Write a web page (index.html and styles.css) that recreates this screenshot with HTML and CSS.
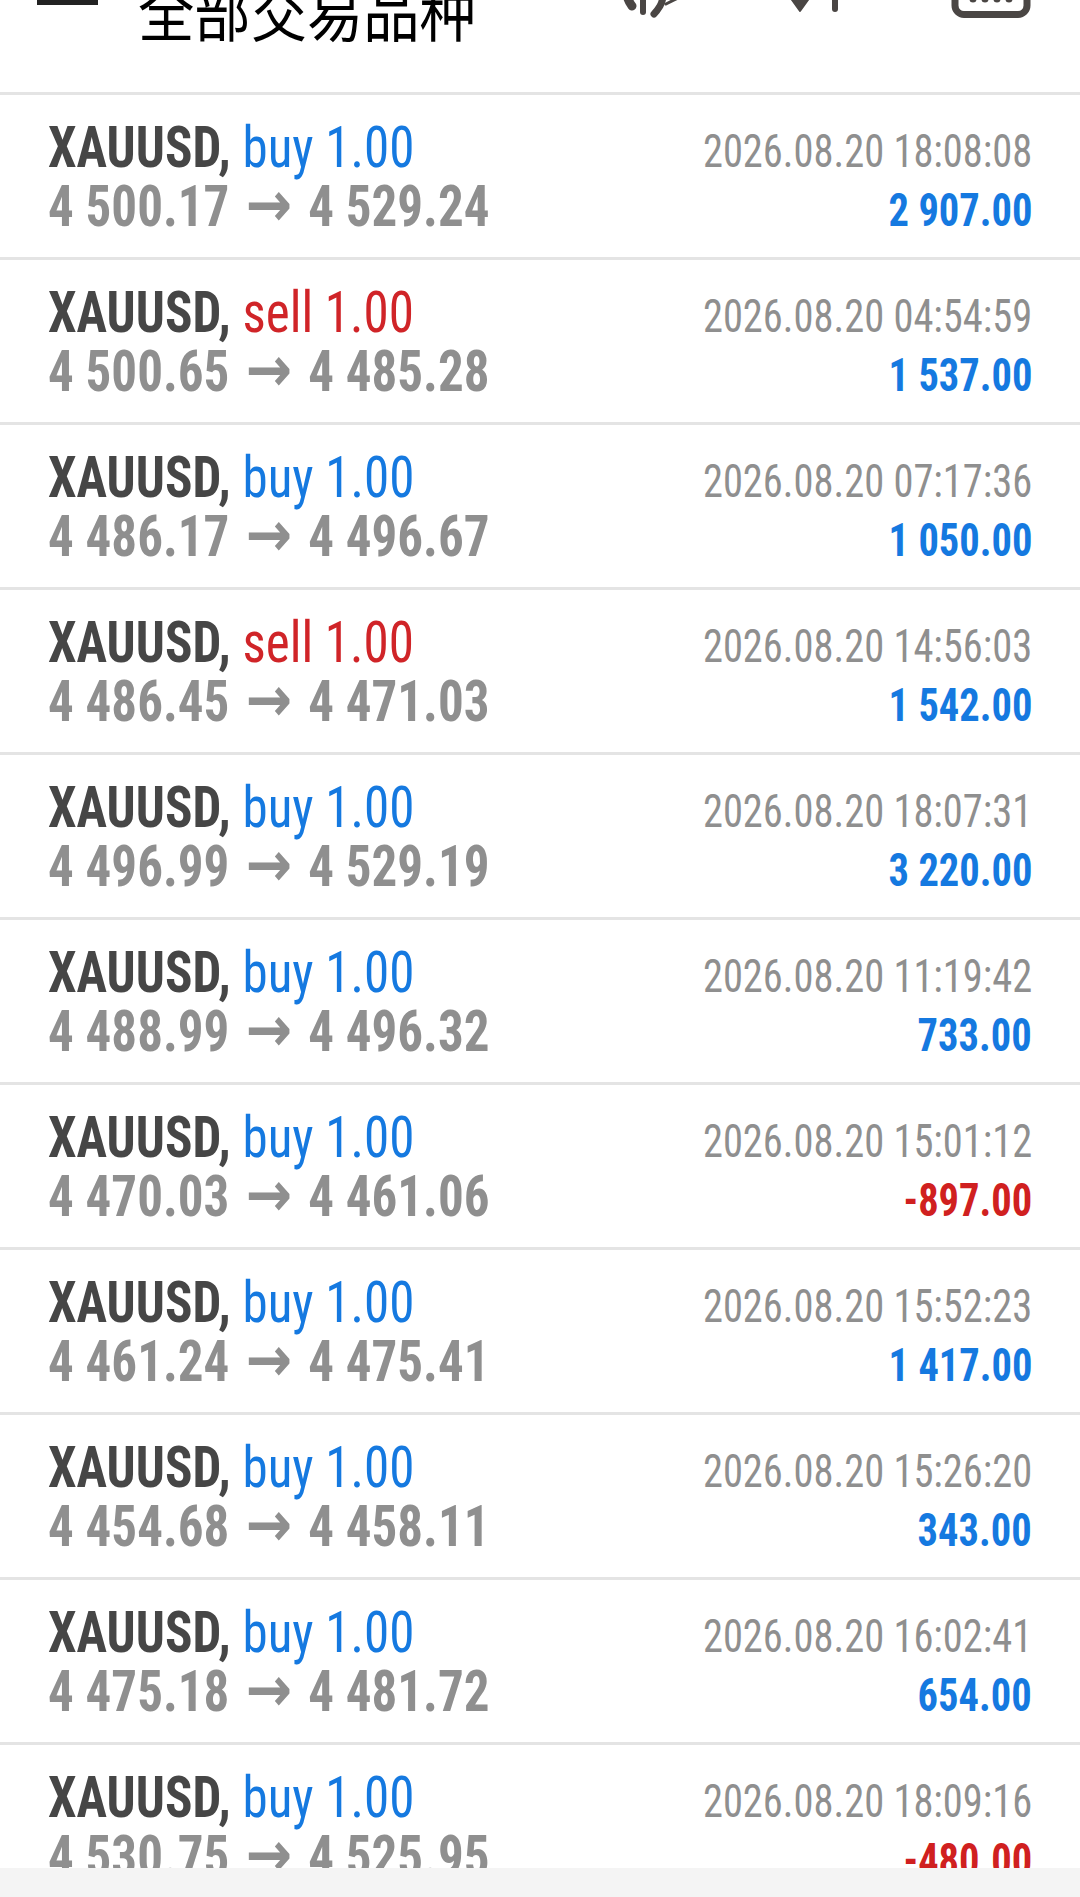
FILE: index.html
```html
<!DOCTYPE html>
<html lang="zh">
<head>
    <meta charset="UTF-8">
    <meta name="viewport" content="width=device-width, initial-scale=1.0">
    <title>交易历史</title>
    <link rel="stylesheet" href="styles.css">
</head>
<body>
    <header class="topbar">
        <div class="toolbar">
            <span class="menu-btn"></span>
            <h1 class="title">全部交易品种</h1>
            <svg class="icon icon-money" width="62" height="72" viewBox="0 0 62 72">
                <path d="M12 26 A26 26 0 0 0 10 60" fill="none" stroke="#4a4644" stroke-width="9" stroke-linecap="round"/>
                <rect x="18" y="14" width="6" height="55" rx="3" fill="#4a4644"/>
                <path d="M30 34 Q46 46 38 60 Q35 65 32 68" fill="none" stroke="#4a4644" stroke-width="7" stroke-linecap="round"/>
                <path d="M44 58 L60 50" fill="none" stroke="#4a4644" stroke-width="3" stroke-linecap="round"/>
            </svg>
            <svg class="icon icon-sort" width="54" height="72" viewBox="0 0 54 72">
                <rect x="12" y="0" width="6" height="46" fill="#4a4644"/>
                <path d="M0 44 L30 44 L15 65 Z" fill="#4a4644" stroke="#4a4644" stroke-width="2" stroke-linejoin="round"/>
                <rect x="47" y="8" width="6" height="58" rx="3" fill="#4a4644"/>
            </svg>
            <svg class="icon icon-cal" width="80" height="72" viewBox="0 0 80 72">
                <rect x="4" y="8" width="72" height="60.5" rx="9" fill="none" stroke="#4a4644" stroke-width="7"/>
                <circle cx="22" cy="53" r="3.5" fill="#4a4644"/>
                <circle cx="34" cy="53" r="3.5" fill="#4a4644"/>
                <circle cx="46" cy="53" r="3.5" fill="#4a4644"/>
                <circle cx="58" cy="53" r="3.5" fill="#4a4644"/>
            </svg>
        </div>
    </header>

    <ul class="deals">
        <li class="deal">
            <div class="line"><span class="sym">XAUUSD, <span class="buy">buy 1.00</span></span><span class="time">2026.08.20 18:08:08</span></div>
            <div class="line"><span class="price">4 500.17 <span class="arrow">→</span> 4 529.24</span><span class="profit">2 907.00</span></div>
        </li>
        <li class="deal">
            <div class="line"><span class="sym">XAUUSD, <span class="sell">sell 1.00</span></span><span class="time">2026.08.20 04:54:59</span></div>
            <div class="line"><span class="price">4 500.65 <span class="arrow">→</span> 4 485.28</span><span class="profit">1 537.00</span></div>
        </li>
        <li class="deal">
            <div class="line"><span class="sym">XAUUSD, <span class="buy">buy 1.00</span></span><span class="time">2026.08.20 07:17:36</span></div>
            <div class="line"><span class="price">4 486.17 <span class="arrow">→</span> 4 496.67</span><span class="profit">1 050.00</span></div>
        </li>
        <li class="deal">
            <div class="line"><span class="sym">XAUUSD, <span class="sell">sell 1.00</span></span><span class="time">2026.08.20 14:56:03</span></div>
            <div class="line"><span class="price">4 486.45 <span class="arrow">→</span> 4 471.03</span><span class="profit">1 542.00</span></div>
        </li>
        <li class="deal">
            <div class="line"><span class="sym">XAUUSD, <span class="buy">buy 1.00</span></span><span class="time">2026.08.20 18:07:31</span></div>
            <div class="line"><span class="price">4 496.99 <span class="arrow">→</span> 4 529.19</span><span class="profit">3 220.00</span></div>
        </li>
        <li class="deal">
            <div class="line"><span class="sym">XAUUSD, <span class="buy">buy 1.00</span></span><span class="time">2026.08.20 11:19:42</span></div>
            <div class="line"><span class="price">4 488.99 <span class="arrow">→</span> 4 496.32</span><span class="profit">733.00</span></div>
        </li>
        <li class="deal">
            <div class="line"><span class="sym">XAUUSD, <span class="buy">buy 1.00</span></span><span class="time">2026.08.20 15:01:12</span></div>
            <div class="line"><span class="price">4 470.03 <span class="arrow">→</span> 4 461.06</span><span class="profit loss">-897.00</span></div>
        </li>
        <li class="deal">
            <div class="line"><span class="sym">XAUUSD, <span class="buy">buy 1.00</span></span><span class="time">2026.08.20 15:52:23</span></div>
            <div class="line"><span class="price">4 461.24 <span class="arrow">→</span> 4 475.41</span><span class="profit">1 417.00</span></div>
        </li>
        <li class="deal">
            <div class="line"><span class="sym">XAUUSD, <span class="buy">buy 1.00</span></span><span class="time">2026.08.20 15:26:20</span></div>
            <div class="line"><span class="price">4 454.68 <span class="arrow">→</span> 4 458.11</span><span class="profit">343.00</span></div>
        </li>
        <li class="deal">
            <div class="line"><span class="sym">XAUUSD, <span class="buy">buy 1.00</span></span><span class="time">2026.08.20 16:02:41</span></div>
            <div class="line"><span class="price">4 475.18 <span class="arrow">→</span> 4 481.72</span><span class="profit">654.00</span></div>
        </li>
        <li class="deal">
            <div class="line"><span class="sym">XAUUSD, <span class="buy">buy 1.00</span></span><span class="time">2026.08.20 18:09:16</span></div>
            <div class="line"><span class="price">4 530.75 <span class="arrow">→</span> 4 525.95</span><span class="profit loss">-480.00</span></div>
        </li>
    </ul>

    <div class="navbar"></div>
</body>
</html>
```

FILE: styles.css
```css
body {
    margin: 0;
    background-color: #fff;
    font-family: Roboto, "Noto Sans", sans-serif;
    overflow: hidden;
}

/* header is scrolled partly out of view, only its lower part shows */
.topbar {
    display: flex;
    height: 92px;
}

.toolbar {
    flex: 1;
    display: flex;
    align-items: flex-start;
    height: 96px;
    margin-top: -54px;
    padding-left: 37px;
}

.menu-btn {
    display: block;
    width: 61px;
    height: 5px;
    margin-top: 54px;
    background-color: #222;
}

.title {
    margin: 30px 0 0 40px;
    width: 338px;
    font-family: "Noto Sans CJK SC", sans-serif;
    font-weight: normal;
    font-size: 64px;
    line-height: 1;
    color: #000;
    white-space: nowrap;
    transform: scaleX(0.88);
    transform-origin: left center;
}

.icon {
    flex-shrink: 0;
}

.icon-money {
    margin-left: 146px;
}

.icon-sort {
    margin-left: 101px;
}

.icon-cal {
    margin-left: 112px;
}

.deals {
    list-style: none;
    margin: 0;
    padding: 0;
}

.deal {
    box-sizing: border-box;
    height: 165px;
    padding: 18px 48px 0 48px;
    border-top: 3px solid #e4e4e4;
}

.line {
    display: flex;
    justify-content: space-between;
    align-items: baseline;
    height: 55px;
}

/* condensed Roboto, squeezed a little more to match the app */
.sym, .price, .time, .profit {
    font-stretch: 75%;
    white-space: nowrap;
    transform: scaleX(0.88);
}

.sym, .price {
    font-size: 58px;
    font-weight: bold;
    transform-origin: left center;
}

.time, .profit {
    font-size: 46px;
    transform-origin: right center;
}

.sym {
    color: #464646;
}

.buy, .sell {
    font-weight: normal;
}

.buy {
    color: #1579e0;
}

.sell {
    color: #d02428;
}

.price {
    color: #8f8f8f;
}

.arrow {
    margin: 0 5px;
    font-family: "DejaVu Sans", sans-serif;
    font-stretch: normal;
    font-size: 63px;
}

.time {
    color: #8f8f8f;
}

.profit {
    font-weight: bold;
    color: #1579e0;
}

.profit.loss {
    color: #d02020;
}

.navbar {
    position: fixed;
    left: 0;
    right: 0;
    bottom: 0;
    height: 29px;
    background-color: #f4f4f4;
}
```
